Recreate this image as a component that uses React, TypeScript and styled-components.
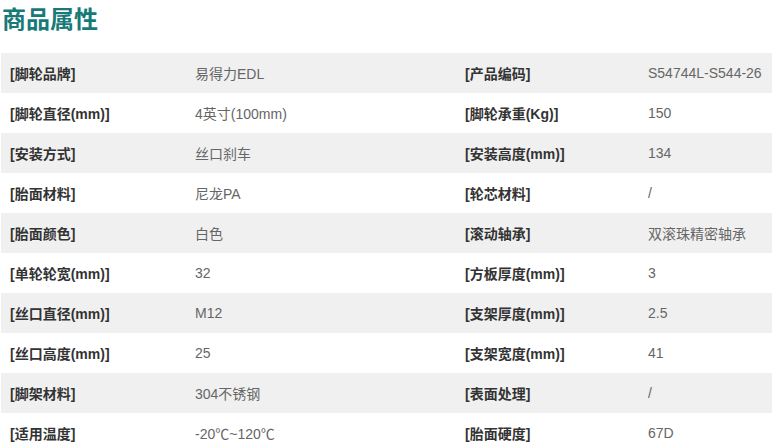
import React, { FC } from 'react';
import styled, { createGlobalStyle } from 'styled-components';

const GlobalStyle = createGlobalStyle`
    html, body {
        margin: 0;
        padding: 0;
        background: #fff;
        font-family: "Liberation Sans", Arial, "Noto Sans CJK SC", sans-serif;
    }
`

const Wrapper = styled.div`
    width: 772px;
    overflow: hidden;
`

const Title = styled.h2`
    margin: 0;
    padding: 5px 0 0 2px;
    height: 53px;
    box-sizing: border-box;
    font-size: 24px;
    line-height: 26px;
    font-weight: bold;
    color: #177a78;
    font-family: "Noto Sans CJK SC", sans-serif;
`

const Table = styled.div`
    display: grid;
    grid-template-columns: 185px 270px 183px 134px;
    margin-left: 1px;
`

const Row = styled.div<{ $odd: boolean }>`
    display: contents;

    & > div {
        background: ${p => (p.$odd ? '#f0f0f0' : '#fff')};
    }
`

const Cell = styled.div<{ $label?: boolean }>`
    height: 40px;
    display: flex;
    align-items: center;
    padding-left: 9px;
    font-size: 14px;
    white-space: nowrap;
    color: ${p => (p.$label ? '#333' : '#666')};
    font-weight: ${p => (p.$label ? 'bold' : 'normal')};
`

const rows: [string, string, string, string][] = [
    ['[脚轮品牌]', '易得力EDL', '[产品编码]', 'S54744L-S544-26'],
    ['[脚轮直径(mm)]', '4英寸(100mm)', '[脚轮承重(Kg)]', '150'],
    ['[安装方式]', '丝口刹车', '[安装高度(mm)]', '134'],
    ['[胎面材料]', '尼龙PA', '[轮芯材料]', '/'],
    ['[胎面颜色]', '白色', '[滚动轴承]', '双滚珠精密轴承'],
    ['[单轮轮宽(mm)]', '32', '[方板厚度(mm)]', '3'],
    ['[丝口直径(mm)]', 'M12', '[支架厚度(mm)]', '2.5'],
    ['[丝口高度(mm)]', '25', '[支架宽度(mm)]', '41'],
    ['[脚架材料]', '304不锈钢', '[表面处理]', '/'],
    ['[适用温度]', '-20℃~120℃', '[胎面硬度]', '67D'],
]

const App: FC = () => {
    return (
        <Wrapper>
            <GlobalStyle />
            <Title>商品属性</Title>
            <Table>
                {rows.map((r, i) => (
                    <Row key={i} $odd={i % 2 === 0}>
                        <Cell $label>{r[0]}</Cell>
                        <Cell>{r[1]}</Cell>
                        <Cell $label>{r[2]}</Cell>
                        <Cell>{r[3]}</Cell>
                    </Row>
                ))}
            </Table>
        </Wrapper>
    )
}

export default App
